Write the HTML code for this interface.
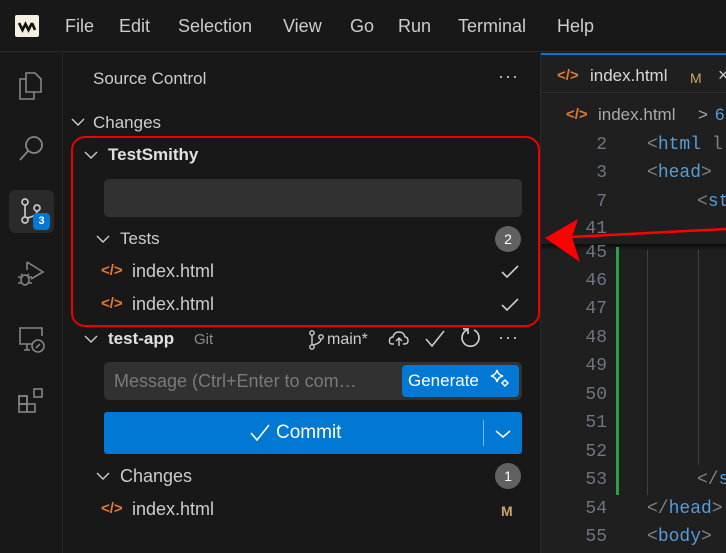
<!DOCTYPE html>
<html><head><meta charset="utf-8"><style>
*{margin:0;padding:0;box-sizing:border-box}
body{width:726px;height:553px;overflow:hidden;background:#181818;font-family:"Liberation Sans",sans-serif;color:#ccc;position:relative}
.a{position:absolute;white-space:nowrap}
.t{font-size:17px;line-height:20px}
.mono{font-family:"Liberation Mono",monospace;font-size:18px}
.ln{position:absolute;right:119px;width:60px;text-align:right;color:#6e7681;font-family:"Liberation Mono",monospace;font-size:18px}
.code{position:absolute;font-family:"Liberation Mono",monospace;font-size:18px;color:#808080}
.tag{color:#569cd6}
svg{position:absolute;overflow:visible}
</style></head><body>
<!-- menubar -->
<div class="a" style="left:0;top:0;width:726px;height:52px;background:#181818;border-bottom:1px solid #2b2b2b"></div>
<div class="a" style="left:15px;top:15px;width:24px;height:22px;background:#f5efe0;border-radius:2px"></div>
<svg style="left:15px;top:15px" width="24" height="22"><path d="M4 8 L7.5 15 L10.5 9 L13.5 15 L17 8 M17 8 L20 15" stroke="#111" stroke-width="2.6" fill="none" stroke-linejoin="miter"/></svg>
<div class="a t" style="left:65px;top:16px;font-size:18px;color:#ccc">File</div>
<div class="a t" style="left:119px;top:16px;font-size:18px">Edit</div>
<div class="a t" style="left:178px;top:16px;font-size:18px">Selection</div>
<div class="a t" style="left:283px;top:16px;font-size:18px">View</div>
<div class="a t" style="left:350px;top:16px;font-size:18px">Go</div>
<div class="a t" style="left:398px;top:16px;font-size:18px">Run</div>
<div class="a t" style="left:458px;top:16px;font-size:18px">Terminal</div>
<div class="a t" style="left:557px;top:16px;font-size:18px">Help</div>
<!-- activity bar -->
<div class="a" style="left:62px;top:53px;width:1px;height:500px;background:#2b2b2b"></div>
<svg style="left:18px;top:72px" width="26" height="28" fill="none" stroke="#858585" stroke-width="1.6"><path d="M8 1 H17 L23 7 V20 H8 Z"/><path d="M8 7 H2 V27 H16 V20"/></svg>
<svg style="left:19px;top:135px" width="26" height="26" fill="none" stroke="#858585" stroke-width="1.8"><circle cx="15" cy="10" r="8"/><path d="M9 16 L1 25"/></svg>
<div class="a" style="left:9px;top:190px;width:45px;height:43px;background:#2a2a2a;border-radius:6px"></div>
<svg style="left:21px;top:198px" width="24" height="28" fill="none" stroke="#c5c5c5" stroke-width="1.7"><circle cx="4" cy="4" r="3"/><circle cx="4" cy="22" r="3"/><circle cx="16" cy="10" r="3"/><path d="M4 7 V19 M16 13 Q16 18 6 20"/></svg>
<div class="a" style="left:33px;top:213px;width:17px;height:17px;background:#0078d4;border-radius:4px;color:#fff;font-size:11px;font-weight:bold;text-align:center;line-height:17px">3</div>
<svg style="left:17px;top:260px" width="28" height="28" fill="none" stroke="#858585" stroke-width="1.6"><path d="M10 2 L26 12 L14 19"/><path d="M10 2 V10"/><ellipse cx="8" cy="20" rx="4" ry="5"/><path d="M1 17 H4 M12 17 H15 M1 23 H4 M12 23 H15 M4 14 L6 16 M12 14 L10 16"/></svg>
<svg style="left:18px;top:326px" width="28" height="28" fill="none" stroke="#858585" stroke-width="1.6"><path d="M14 18 H2 V2 H24 V10"/><path d="M6 24 H12 M9 18 V24"/><circle cx="20" cy="20" r="6"/><path d="M18 22 L22 18"/></svg>
<svg style="left:18px;top:387px" width="28" height="28" fill="none" stroke="#858585" stroke-width="1.6"><rect x="1" y="9" width="8" height="8"/><rect x="9" y="9" width="8" height="8" style="display:none"/><rect x="1" y="17" width="8" height="8"/><rect x="9" y="17" width="8" height="8"/><rect x="1" y="9" width="8" height="8"/><rect x="9" y="9" width="0" height="0"/><rect x="16" y="2" width="8" height="8"/></svg>
<!-- sidebar -->
<div class="a t" style="left:93px;top:69px;color:#ccc">Source Control</div>
<div class="a" style="left:498px;top:66px;color:#ccc;font-size:18px;letter-spacing:1px">···</div>
<svg style="left:71px;top:117px" width="14" height="10" fill="none" stroke="#ccc" stroke-width="1.4"><path d="M1 2 L7 8 L13 2"/></svg>
<div class="a t" style="left:93px;top:113px">Changes</div>
<div class="a" style="left:71px;top:136px;width:469px;height:191px;border:2px solid #e00;border-radius:14px"></div>
<svg style="left:84px;top:150px" width="14" height="10" fill="none" stroke="#ccc" stroke-width="1.4"><path d="M1 2 L7 8 L13 2"/></svg>
<div class="a t" style="left:108px;top:145px;font-weight:bold;color:#e0e0e0">TestSmithy</div>
<div class="a" style="left:104px;top:179px;width:418px;height:38px;background:#313131;border-radius:5px"></div>
<svg style="left:96px;top:234px" width="14" height="10" fill="none" stroke="#ccc" stroke-width="1.4"><path d="M1 2 L7 8 L13 2"/></svg>
<div class="a t" style="left:120px;top:229px">Tests</div>
<div class="a" style="left:495px;top:226px;width:26px;height:26px;border-radius:13px;background:#616161;color:#fff;font-size:14px;text-align:center;line-height:26px">2</div>
<div class="a" style="left:101px;top:262px;color:#e37933;font-size:15px;font-weight:bold">&lt;/&gt;</div>
<div class="a t" style="left:132px;top:261px;font-size:18px">index.html</div>
<svg style="left:500px;top:264px" width="20" height="16" fill="none" stroke="#ccc" stroke-width="1.6"><path d="M2 8 L7 13 L18 2"/></svg>
<div class="a" style="left:101px;top:295px;color:#e37933;font-size:15px;font-weight:bold">&lt;/&gt;</div>
<div class="a t" style="left:132px;top:294px;font-size:18px">index.html</div>
<svg style="left:500px;top:297px" width="20" height="16" fill="none" stroke="#ccc" stroke-width="1.6"><path d="M2 8 L7 13 L18 2"/></svg>
<svg style="left:84px;top:334px" width="14" height="10" fill="none" stroke="#ccc" stroke-width="1.4"><path d="M1 2 L7 8 L13 2"/></svg>
<div class="a t" style="left:108px;top:329px;font-weight:bold;color:#e0e0e0">test-app</div>
<div class="a t" style="left:194px;top:330px;font-size:15px;color:#8b8b8b">Git</div>
<svg style="left:309px;top:330px" width="16" height="20" fill="none" stroke="#ccc" stroke-width="1.4"><circle cx="3" cy="3" r="2.2"/><circle cx="3" cy="17" r="2.2"/><circle cx="12" cy="7" r="2.2"/><path d="M3 5 V15 M12 9 Q12 13 4 15"/></svg>
<div class="a t" style="left:327px;top:330px;font-size:16px">main*</div>
<svg style="left:389px;top:331px" width="20" height="16" fill="none" stroke="#ccc" stroke-width="1.4"><path d="M5 13 H3 Q0 13 0.5 9 Q1 6 4 6 Q5 1 10 1 Q15 1 16 6 Q19 6 19 10 Q19 13 15 13 H14"/><path d="M10 15 V7 M7 10 L10 7 L13 10"/></svg>
<svg style="left:425px;top:330px" width="20" height="18" fill="none" stroke="#ccc" stroke-width="1.6"><path d="M1 9 L7 16 L19 1"/></svg>
<svg style="left:460px;top:327px" width="22" height="22" fill="none" stroke="#ccc" stroke-width="1.7"><path d="M7 3 A8.5 8.5 0 1 0 14 3"/><path d="M3 2 H8 V7"/></svg>
<div class="a" style="left:498px;top:327px;color:#ccc;font-size:18px;letter-spacing:1px">···</div>
<div class="a" style="left:104px;top:362px;width:418px;height:38px;background:#313131;border-radius:5px"></div>
<div class="a t" style="left:114px;top:371px;color:#7a7a7a;font-size:18px">Message (Ctrl+Enter to com…</div>
<div class="a" style="left:402px;top:365px;width:117px;height:32px;background:#0078d4;border-radius:4px"></div>
<div class="a t" style="left:408px;top:371px;color:#fff">Generate</div>
<svg style="left:490px;top:369px" width="24" height="24" fill="none" stroke="#fff" stroke-width="1.5"><path d="M7 1 Q8 6 13 7 Q8 8 7 13 Q6 8 1 7 Q6 6 7 1Z"/><path d="M15 11 L18 14 L15 17 L12 14Z"/></svg>
<div class="a" style="left:104px;top:412px;width:418px;height:42px;background:#0078d4;border-radius:3px"></div>
<div class="a" style="left:483px;top:420px;width:1px;height:26px;background:#7fb4e6"></div>
<svg style="left:250px;top:424px" width="22" height="18" fill="none" stroke="#fff" stroke-width="1.6"><path d="M1 9 L7 16 L19 1"/></svg>
<div class="a t" style="left:276px;top:423px;color:#fff;font-size:19px">Commit</div>
<svg style="left:495px;top:429px" width="16" height="10" fill="none" stroke="#fff" stroke-width="1.5"><path d="M1 2 L8 8 L15 2"/></svg>
<svg style="left:96px;top:471px" width="14" height="10" fill="none" stroke="#ccc" stroke-width="1.4"><path d="M1 2 L7 8 L13 2"/></svg>
<div class="a t" style="left:120px;top:466px;font-size:18px">Changes</div>
<div class="a" style="left:495px;top:463px;width:26px;height:26px;border-radius:13px;background:#616161;color:#fff;font-size:14px;text-align:center;line-height:26px">1</div>
<div class="a" style="left:101px;top:500px;color:#e37933;font-size:15px;font-weight:bold">&lt;/&gt;</div>
<div class="a t" style="left:132px;top:499px;font-size:18px">index.html</div>
<div class="a t" style="left:501px;top:501px;font-size:14px;color:#c9a66b;font-weight:bold">M</div>
<!-- editor -->
<div class="a" style="left:540px;top:53px;width:1px;height:500px;background:#2b2b2b"></div>
<div class="a" style="left:541px;top:53px;width:185px;height:500px;background:#1f1f1f"></div>
<div class="a" style="left:541px;top:53px;width:185px;height:2px;background:#0078d4"></div>
<div class="a" style="left:541px;top:92px;width:185px;height:1px;background:#2b2b2b"></div>
<div class="a" style="left:557px;top:67px;color:#e37933;font-size:15px;font-weight:bold">&lt;/&gt;</div>
<div class="a t" style="left:590px;top:66px;font-size:17px;color:#d8d8d8">index.html</div>
<div class="a t" style="left:690px;top:68px;font-size:14px;color:#c9a66b">M</div>
<div class="a t" style="left:718px;top:65px;font-size:18px;color:#ccc">×</div>
<div class="a" style="left:566px;top:106px;color:#e37933;font-size:15px;font-weight:bold">&lt;/&gt;</div>
<div class="a t" style="left:598px;top:105px;font-size:17px;color:#a9a9a9">index.html</div>
<div class="a t" style="left:698px;top:105px;font-size:17px;color:#a9a9a9">&gt;</div>
<div class="a t" style="left:715px;top:105px;font-size:17px;color:#569cd6">6</div>
<!-- sticky -->
<div class="a" style="left:541px;top:244px;width:185px;height:6px;background:linear-gradient(#0c0c0c,rgba(31,31,31,0))"></div>
<div class="ln" style="top:135px">2</div><div class="code" style="left:647px;top:135px">&lt;<span class="tag">html</span> l</div>
<div class="ln" style="top:163px">3</div><div class="code" style="left:647px;top:163px">&lt;<span class="tag">head</span>&gt;</div>
<div class="ln" style="top:192px">7</div><div class="code" style="left:697px;top:192px">&lt;<span class="tag">st</span></div>
<div class="ln" style="top:219px">41</div>
<div class="ln" style="top:243px">45</div>
<div class="ln" style="top:271px">46</div>
<div class="ln" style="top:299px">47</div>
<div class="ln" style="top:328px">48</div>
<div class="ln" style="top:356px">49</div>
<div class="ln" style="top:385px">50</div>
<div class="ln" style="top:413px">51</div>
<div class="ln" style="top:442px">52</div>
<div class="ln" style="top:470px">53</div><div class="code" style="left:697px;top:470px">&lt;/<span class="tag">s</span></div>
<div class="ln" style="top:499px">54</div><div class="code" style="left:647px;top:499px">&lt;/<span class="tag">head</span>&gt;</div>
<div class="ln" style="top:527px">55</div><div class="code" style="left:647px;top:527px">&lt;<span class="tag">body</span>&gt;</div>
<div class="a" style="left:616px;top:247px;width:3px;height:248px;background:#2ea043"></div>
<div class="a" style="left:647px;top:250px;width:1px;height:245px;background:#404040"></div>
<div class="a" style="left:698px;top:250px;width:1px;height:215px;background:#404040"></div>
<!-- arrow -->
<svg style="left:0;top:0" width="726" height="553"><path d="M726 229 L570 237" stroke="#f00" stroke-width="2.5"/><path d="M545 238 L578 219 L572 237 L580 262 Z" fill="#f00"/></svg>
</body></html>
